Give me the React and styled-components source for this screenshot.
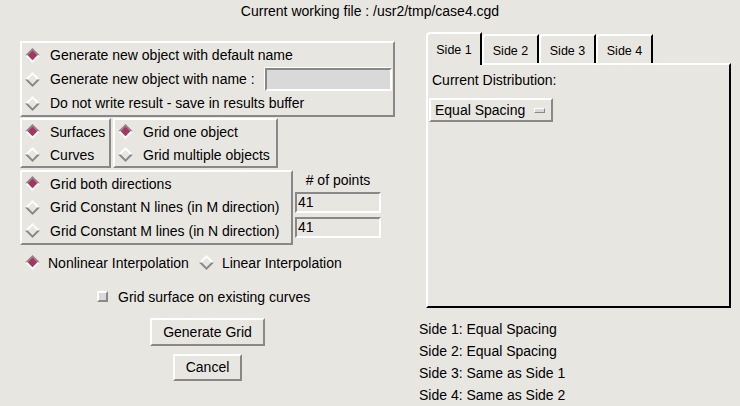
import styled, { createGlobalStyle } from "styled-components";

const BG = "#e8e6e1";
const SHADOW = "#888888";
const LIGHT = "#ffffff";
const MAROON = "#b03060";

const GlobalStyle = createGlobalStyle`
  body {
    margin: 0;
    background: ${BG};
    font-family: "Liberation Sans", Helvetica, Arial, sans-serif;
    font-size: 14px;
    color: #000;
  }
`;

/** motif style diamond radio */
const Diamond = ({ on }) => (
  <DiamondSvg width="15" height="15" viewBox="0 0 15 15">
    <polygon points="0,7.5 7.5,0 15,7.5" fill={on ? SHADOW : LIGHT} />
    <polygon points="0,7.5 7.5,15 15,7.5" fill={on ? LIGHT : SHADOW} />
    <polygon points="7.5,2.8 12.2,7.5 7.5,12.2 2.8,7.5" fill={on ? MAROON : BG} />
  </DiamondSvg>
);

const Radio = ({ on, children, h }) => (
  <RadioRow $h={h}>
    <Diamond on={on} />
    <span>{children}</span>
  </RadioRow>
);

const App = () => {
  return (
    <Page>
      <GlobalStyle />
      <Title>Current working file : /usr2/tmp/case4.cgd</Title>
      <Body>
        <LeftCol>
          <RaisedBox $w={375}>
            <Radio on h={24}>Generate new object with default name</Radio>
            <RadioRow $h={24}>
              <Diamond />
              <span>Generate new object with name :</span>
              <NameField />
            </RadioRow>
            <Radio h={24}>Do not write result - save in results buffer</Radio>
          </RaisedBox>

          <BoxLine $mt={1}>
            <RaisedBox $w={91}>
              <Radio on h={23}>Surfaces</Radio>
              <Radio h={23}>Curves</Radio>
            </RaisedBox>
            <RaisedBox $w={165}>
              <Radio on h={23}>Grid one object</Radio>
              <Radio h={23}>Grid multiple objects</Radio>
            </RaisedBox>
          </BoxLine>

          <BoxLine $mt={2}>
            <RaisedBox $w={273}>
              <Radio on h={23.5}>Grid both directions</Radio>
              <Radio h={23.5}>Grid Constant N lines (in M direction)</Radio>
              <Radio h={23.5}>Grid Constant M lines (in N direction)</Radio>
            </RaisedBox>
            <PointsCol>
              <PointsLabel># of points</PointsLabel>
              <PointField>41</PointField>
              <PointField>41</PointField>
            </PointsCol>
          </BoxLine>

          <InterpRow>
            <Diamond on />
            <span>Nonlinear Interpolation</span>
            <Diamond />
            <span>Linear Interpolation</span>
          </InterpRow>

          <CheckRow>
            <CheckBox />
            <span>Grid surface on existing curves</span>
          </CheckRow>

          <PushButton $w={115} $h={28} $mt={9}>Generate Grid</PushButton>
          <PushButton $w={69} $h={27} $mt={8}>Cancel</PushButton>
        </LeftCol>

        <RightCol>
          <TabArea>
            <TabRow>
              <Tab $active $w={56}>Side 1</Tab>
              <Tab $w={57}>Side 2</Tab>
              <Tab $w={57}>Side 3</Tab>
              <Tab $w={57}>Side 4</Tab>
            </TabRow>
            <TabPanel>
              <PanelLabel>Current Distribution:</PanelLabel>
              <OptionMenu>
                <span>Equal Spacing</span>
                <OptionIndicator />
              </OptionMenu>
            </TabPanel>
          </TabArea>
          <Summary>
            <div>Side 1: Equal Spacing</div>
            <div>Side 2: Equal Spacing</div>
            <div>Side 3: Same as Side 1</div>
            <div>Side 4: Same as Side 2</div>
          </Summary>
        </RightCol>
      </Body>
    </Page>
  );
};

const Page = styled.div`
  width: 740px;
  height: 406px;
  overflow: hidden;
  display: flex;
  flex-direction: column;
  background: ${BG};
`;

const Title = styled.div`
  height: 24px;
  line-height: 22px;
  text-align: center;
`;

const Body = styled.div`
  display: flex;
  flex: 1;
`;

const LeftCol = styled.div`
  flex: 0 0 375px;
  margin-left: 20px;
  padding-top: 17px;
  display: flex;
  flex-direction: column;
  align-items: center;
`;

const RaisedBox = styled.div`
  box-sizing: border-box;
  width: ${(p) => p.$w}px;
  border: 2px solid;
  border-color: ${LIGHT} ${SHADOW} ${SHADOW} ${LIGHT};
  display: flex;
  flex-direction: column;
`;

const BoxLine = styled.div`
  display: flex;
  gap: 2px;
  align-self: stretch;
  margin-top: ${(p) => p.$mt}px;
`;

const DiamondSvg = styled.svg`
  flex: 0 0 15px;
  display: block;
`;

const RadioRow = styled.div`
  display: flex;
  align-items: center;
  height: ${(p) => p.$h}px;
  padding-left: 3px;
  gap: 10px;
  white-space: nowrap;
`;

const NameField = styled.div`
  flex: 1;
  height: 23px;
  box-sizing: border-box;
  margin: 0 1px 0 0;
  background: #d9d9d9;
  border: 2px solid;
  border-color: ${SHADOW} ${LIGHT} ${LIGHT} ${SHADOW};
  box-shadow: -1px -1px 0 ${LIGHT};
`;

const PointsCol = styled.div`
  width: 86px;
  display: flex;
  flex-direction: column;
  gap: 4px;
`;

const PointsLabel = styled.div`
  height: 18px;
  line-height: 20px;
  text-align: center;
`;

const PointField = styled.div`
  box-sizing: border-box;
  height: 21px;
  padding-left: 1px;
  line-height: 17px;
  border: 2px solid;
  border-color: ${SHADOW} ${LIGHT} ${LIGHT} ${SHADOW};
`;

const InterpRow = styled.div`
  align-self: stretch;
  display: flex;
  align-items: center;
  height: 24px;
  margin-top: 6px;
  padding-left: 5px;
  gap: 8px;
  white-space: nowrap;

  span + svg {
    margin-left: 2px;
  }
`;

const CheckRow = styled.div`
  align-self: stretch;
  display: flex;
  align-items: center;
  height: 24px;
  margin-top: 10px;
  padding-left: 77px;
  gap: 10px;
`;

const CheckBox = styled.div`
  box-sizing: border-box;
  width: 11px;
  height: 11px;
  background: #d8d8d8;
  border: 2px solid;
  border-color: ${LIGHT} ${SHADOW} ${SHADOW} ${LIGHT};
`;

const PushButton = styled.div`
  box-sizing: border-box;
  width: ${(p) => p.$w}px;
  height: ${(p) => p.$h}px;
  margin-top: ${(p) => p.$mt}px;
  display: flex;
  align-items: center;
  justify-content: center;
  border: 2px solid;
  border-color: ${LIGHT} ${SHADOW} ${SHADOW} ${LIGHT};
`;

const RightCol = styled.div`
  flex: 1;
  padding: 8px 0 0 24px;
  display: flex;
  flex-direction: column;
`;

const TabArea = styled.div`
  margin-left: 7px;
  width: 305px;
  display: flex;
  flex-direction: column;
`;

const TabRow = styled.div`
  display: flex;
  align-items: flex-end;
  height: 31px;
`;

const Tab = styled.div`
  box-sizing: border-box;
  width: ${(p) => p.$w}px;
  height: ${(p) => (p.$active ? 33 : 29)}px;
  margin-bottom: ${(p) => (p.$active ? -2 : 0)}px;
  padding-top: ${(p) => (p.$active ? 0 : 3)}px;
  position: relative;
  z-index: ${(p) => (p.$active ? 2 : 0)};
  background: ${BG};
  font-size: 12.5px;
  display: flex;
  align-items: center;
  justify-content: center;
  border-top: 2px solid ${LIGHT};
  border-left: 2px solid ${LIGHT};
  border-right: 2px solid #000;
  border-top-left-radius: 4px;
`;

const TabPanel = styled.div`
  box-sizing: border-box;
  height: 245px;
  padding: 3px 1px;
  border: 2px solid;
  border-color: ${LIGHT} #000 #000 ${LIGHT};
  display: flex;
  flex-direction: column;
  align-items: flex-start;
`;

const PanelLabel = styled.div`
  height: 24px;
  line-height: 24px;
  padding-left: 3px;
`;

const OptionMenu = styled.div`
  box-sizing: border-box;
  width: 124px;
  height: 24px;
  margin-top: 6px;
  padding: 0 6px 0 4px;
  display: flex;
  align-items: center;
  justify-content: space-between;
  border: 2px solid;
  border-color: ${LIGHT} ${SHADOW} ${SHADOW} ${LIGHT};
`;

const OptionIndicator = styled.div`
  box-sizing: border-box;
  width: 11px;
  height: 5px;
  background: #d8d8d8;
  border: 1px solid;
  border-color: ${LIGHT} ${SHADOW} ${SHADOW} ${LIGHT};
`;

const Summary = styled.div`
  margin-top: 10px;
  line-height: 22px;
`;

export default App;
